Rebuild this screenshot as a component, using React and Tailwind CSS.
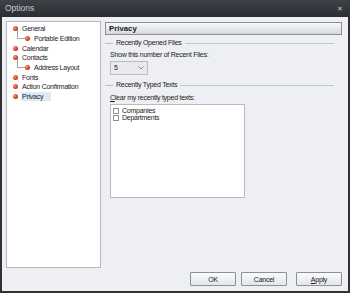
// App.jsx
// Options dialog — Privacy page

const TREE = [
  { label: 'General' },
  { label: 'Portable Edition', child: true },
  { label: 'Calendar' },
  { label: 'Contacts' },
  { label: 'Address Layout', child: true },
  { label: 'Fonts' },
  { label: 'Action Confirmation' },
  { label: 'Privacy', selected: true },
];

const Bullet = () => (
  <span className="block w-[5px] h-[5px] rounded-full bg-[radial-gradient(circle_at_35%_35%,#f59a7a,#d1391a_60%,#a5260f)]" />
);

const TreeRow = ({ label, child, selected }) => (
  <div className="relative flex items-center h-[9.7px]">
    {child && (
      <span className="absolute left-[10px] top-[-4px] w-[8px] h-[9px] border-l border-b border-[#a0a3a8]" />
    )}
    <span className={child ? 'ml-[18px]' : 'ml-[6px]'}>
      <Bullet />
    </span>
    <span
      className={`ml-[3px] px-[1px] leading-[9px] ${selected ? 'bg-[#dce9f7] pr-[8px]' : ''}`}
    >
      {label}
    </span>
  </div>
);

const GroupTitle = ({ children }) => (
  <div className="flex items-center gap-[3px] h-[10px]">
    <span className="w-[8px] h-px bg-[#b9bcc1]" />
    <span>{children}</span>
    <span className="flex-1 h-px bg-[#c3c6cb] mr-[8px]" />
  </div>
);

const Check = ({ label }) => (
  <div className="flex items-center gap-[3px] h-[7.5px]">
    <span className="w-[6px] h-[6px] border border-[#8f9399] bg-white" />
    <span className="leading-[8px]">{label}</span>
  </div>
);

const Button = ({ children }) => (
  <button className="w-[46px] h-[14px] border border-[#8b9097] rounded-[1px] bg-[linear-gradient(#fbfbfc,#e2e5ea)] text-[7px] text-[#222] leading-none">
    {children}
  </button>
);

export default function App() {
  return (
    <div
      className="w-[350px] h-[293px] flex flex-col text-[7px] tracking-[-0.25px] text-[#1a1a1a]"
      style={{ fontFamily: '"Liberation Sans", Arial, sans-serif' }}
    >
      <div className="h-[17px] flex items-center justify-between px-[5px] bg-[linear-gradient(#3e4147,#2b2d32)]">
        <span className="text-[8.5px] tracking-normal text-[#c9cbce]">Options</span>
        <span className="text-[8px] font-bold text-[#b8babd] mr-[3px]">×</span>
      </div>

      <div className="flex-1 flex flex-col bg-[#eeeff2] border-x-2 border-b-2 border-[#2f3136] pl-[4px] pr-[6px] pt-[4px] pb-[5px]">
        <div className="flex gap-[4px] h-[247px]">
          <div className="w-[95px] h-full bg-white border border-[#b6b9bf] pt-[2px]">
            {TREE.map((t) => (
              <TreeRow key={t.label} {...t} />
            ))}
          </div>

          <div className="flex-1 flex flex-col">
            <div className="mt-[1px] h-[13px] flex items-center px-[3px] border border-[#8c9096] bg-[linear-gradient(#f7f8f9,#d6d8dd)] font-bold text-[7.8px] tracking-normal">
              Privacy
            </div>

            <div className="mt-[3px]">
              <GroupTitle>Recently Opened Files</GroupTitle>
            </div>
            <div className="ml-[5px] mt-[2px] leading-[9px]">Show this number of Recent Files:</div>
            <div className="ml-[5px] mt-[2px] w-[38px] h-[14px] flex items-center justify-between px-[3px] border border-[#b8bbc0] bg-[#e9eaed]">
              <span>5</span>
              <svg width="6" height="4" viewBox="0 0 6 4">
                <path d="M0.5 0.5 L3 3 L5.5 0.5" fill="none" stroke="#777" strokeWidth="0.8" />
              </svg>
            </div>

            <div className="mt-[5px]">
              <GroupTitle>Recently Typed Texts</GroupTitle>
            </div>
            <div className="ml-[5px] mt-[3px] leading-[9px]">
              <span className="underline">C</span>lear my recently typed texts:
            </div>
            <div className="ml-[5px] mt-[2px] w-[135px] h-[94px] bg-white border border-[#b8bbc0] pt-[2px] pl-[2px]">
              <Check label="Companies" />
              <Check label="Departments" />
            </div>
          </div>
        </div>

        <div className="mt-[4px] flex justify-end gap-[5px]">
          <Button>OK</Button>
          <Button>Cancel</Button>
          <span className="ml-[4px]">
            <Button>
              <span className="underline">A</span>pply
            </Button>
          </span>
        </div>
      </div>
    </div>
  );
}
